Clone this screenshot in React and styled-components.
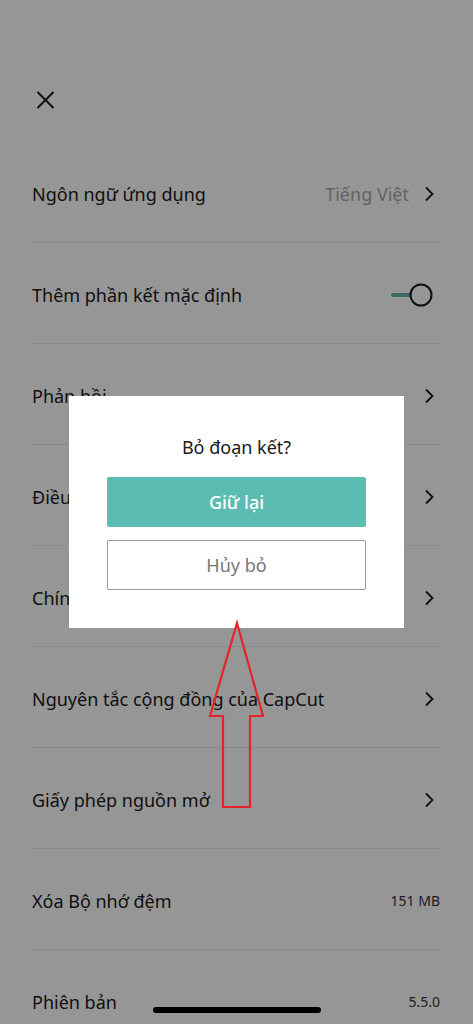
import React from "react";
import styled, { createGlobalStyle } from "styled-components";

const GlobalStyle = createGlobalStyle`
  html, body {
    margin: 0;
    padding: 0;
    background: #fff;
  }
  body {
    font-family: "Noto Sans", Roboto, "Liberation Sans", sans-serif;
    color: #1a1a1a;
  }
`;

const Screen = styled.div`
  position: relative;
  width: 473px;
  height: 1024px;
  overflow: hidden;
  background: #fff;
`;

const Header = styled.div`
  height: 142px;
  padding: 91px 0 0 35px;
  box-sizing: border-box;
`;

const CloseButton = styled.button`
  background: transparent;
  border: none;
  padding: 0;
  margin: 0;
  width: 20px;
  height: 18px;
  display: flex;
  align-items: center;
  justify-content: center;
  color: #1a1a1a;
`;

const List = styled.ul`
  list-style: none;
  margin: 0;
  padding: 0 33px 0 32px;
`;

const Row = styled.li`
  height: 101px;
  border-bottom: 1px solid #ececec;
  display: flex;
  align-items: center;
  justify-content: space-between;
  padding-top: 3px;
  box-sizing: border-box;
`;

const Label = styled.span`
  font-size: 18px;
  line-height: 24px;
  color: #1a1a1a;
`;

const Side = styled.span`
  display: flex;
  align-items: center;
  gap: 15px;
  color: #a8a8a8;
  font-size: 18px;
  line-height: 24px;
  padding-right: 5px;
`;

const ToggleWrap = styled.span`
  display: flex;
  margin-right: 7px;
`;

const SmallValue = styled.span`
  font-size: 14px;
  color: #333;
`;

const Overlay = styled.div`
  position: absolute;
  inset: 0;
  background: rgba(0, 0, 0, 0.41);
`;

const Dialog = styled.div`
  position: absolute;
  left: 69px;
  top: 396px;
  width: 335px;
  height: 232px;
  background: #fff;
  padding: 39px 38px 0;
  box-sizing: border-box;
  display: flex;
  flex-direction: column;
  gap: 13px;
`;

const Title = styled.div`
  text-align: center;
  font-size: 18px;
  color: #1a1a1a;
  line-height: 24px;
  margin-bottom: 5px;
`;

const DialogButton = styled.button`
  height: 50px;
  width: 100%;
  flex-shrink: 0;
  border-radius: 2px;
  font-family: inherit;
  font-size: 18px;
  border: 1px solid ${(p) => (p.$primary ? "#5bbcb1" : "#9a9a9a")};
  background: ${(p) => (p.$primary ? "#5bbcb1" : "#fff")};
  color: ${(p) => (p.$primary ? "#fff" : "#777")};
  font-weight: ${(p) => (p.$primary ? 500 : 400)};
`;

const Arrow = styled.svg`
  position: absolute;
  left: 205px;
  top: 618px;
`;

const HomeBar = styled.div`
  position: absolute;
  left: 153px;
  top: 1007px;
  width: 168px;
  height: 6px;
  border-radius: 3px;
  background: #000;
`;

const Chevron = () => (
  <svg width="11" height="16" viewBox="0 0 11 16" fill="none">
    <path d="M2 1.5 L8.5 8 L2 14.5" stroke="#1a1a1a" strokeWidth="1.8" />
  </svg>
);

const Toggle = () => (
  <ToggleWrap>
    <svg width="42" height="26" viewBox="0 0 42 26" fill="none">
      <line x1="2" y1="13" x2="20" y2="13" stroke="#5fb7ac" strokeWidth="4" strokeLinecap="round" />
      <circle cx="30" cy="13" r="10.5" fill="#fff" stroke="#1a1a1a" strokeWidth="2" />
    </svg>
  </ToggleWrap>
);

const rows = [
  { label: "Ngôn ngữ ứng dụng", value: "Tiếng Việt", chevron: true },
  { label: "Thêm phần kết mặc định", toggle: true },
  { label: "Phản hồi", chevron: true },
  { label: "Điều khoản dịch vụ", chevron: true },
  { label: "Chính sách quyền riêng tư", chevron: true },
  { label: "Nguyên tắc cộng đồng của CapCut", chevron: true },
  { label: "Giấy phép nguồn mở", chevron: true },
  { label: "Xóa Bộ nhớ đệm", small: "151 MB" },
  { label: "Phiên bản", small: "5.5.0" },
];

export default function App() {
  return (
    <>
      <GlobalStyle />
      <Screen>
        <Header>
          <CloseButton>
            <svg width="19" height="18" viewBox="0 0 19 18" fill="none">
              <path d="M1.5 1 L17.5 17 M17.5 1 L1.5 17" stroke="#1a1a1a" strokeWidth="2" />
            </svg>
          </CloseButton>
        </Header>
        <List>
          {rows.map((r) => (
            <Row key={r.label}>
              <Label>{r.label}</Label>
              {r.chevron && (
                <Side>
                  {r.value}
                  <Chevron />
                </Side>
              )}
              {r.toggle && <Toggle />}
              {r.small && <SmallValue>{r.small}</SmallValue>}
            </Row>
          ))}
        </List>
        <Overlay />
        <Dialog>
          <Title>Bỏ đoạn kết?</Title>
          <DialogButton $primary>Giữ lại</DialogButton>
          <DialogButton>Hủy bỏ</DialogButton>
        </Dialog>
        <Arrow width="64" height="194" viewBox="205 618 64 194" fill="none">
          <path
            d="M237 623 L263 716 L250 716 L250 807 L223 807 L223 716 L210 716 Z"
            stroke="#e3242b"
            strokeWidth="2.2"
            strokeLinejoin="miter"
          />
        </Arrow>
        <HomeBar />
      </Screen>
    </>
  );
}
